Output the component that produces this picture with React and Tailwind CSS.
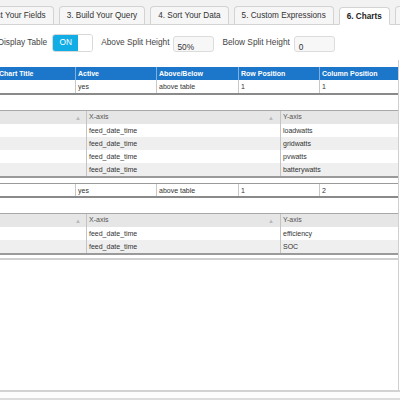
import React from "react";

const tabs = [
  { label: "2. Select Your Fields" },
  { label: "3. Build Your Query" },
  { label: "4. Sort Your Data" },
  { label: "5. Custom Expressions" },
  { label: "6. Charts", active: true },
  { label: "7. Publish" },
];

function Tab({ label, active }) {
  return (
    <div
      className={
        "h-[18px] shrink-0 px-[7px] border border-[#d3d3d3] rounded-t-[4px] leading-[17px] text-[8.2px] whitespace-nowrap " +
        (active
          ? "bg-white font-bold text-[#222] border-b-white -mb-px"
          : "bg-[#f6f6f6] text-[#333] border-b-0")
      }
    >
      {label}
    </div>
  );
}

function Arrow() {
  return <span className="text-[6px] text-[#b8b8b8] leading-none">▲</span>;
}

function MainHeader() {
  const cols = [
    ["Chart Title", "w-[79px]"],
    ["Active", "w-[81px]"],
    ["Above/Below", "w-[82px]"],
    ["Row Position", "w-[81px]"],
    ["Column Position", "flex-1"],
  ];
  return (
    <div className="flex h-[13px] bg-[#1c76c9] text-white font-bold text-[7px]">
      {cols.map(([t, w], i) => (
        <div
          key={t}
          className={w + " pl-[2px] leading-[13px] " + (i < 4 ? "border-r border-[#7fb0e0]" : "")}
        >
          {t}
        </div>
      ))}
    </div>
  );
}

function MainRow({ cells, top }) {
  const widths = ["w-[79px]", "w-[81px]", "w-[82px]", "w-[81px]", "flex-1"];
  return (
    <div
      className={
        "flex h-[15px] border-b-2 border-[#8a8a8a] text-[7px] text-[#333] " +
        (top ? "border-t border-t-[#9a9a9a]" : "")
      }
    >
      {cells.map((c, i) => (
        <div
          key={i}
          className={widths[i] + " pl-[2px] leading-[13px] " + (i < 4 ? "border-r border-[#c8c8c8]" : "")}
        >
          {c}
        </div>
      ))}
    </div>
  );
}

function SubTable({ rows }) {
  return (
    <div className="border-t border-[#a8a8a8] border-b-2 border-b-[#9a9a9a] text-[7px]">
      <div className="flex h-[13px] bg-[#e6e6e6] text-[#555]">
        <div className="w-[90px] flex items-center justify-end pr-[5px] border-r border-[#c4c4c4]">
          <Arrow />
        </div>
        <div className="w-[194px] flex items-center justify-between pl-[2px] pr-[6px] border-r border-[#c4c4c4]">
          <span>X-axis</span>
          <Arrow />
        </div>
        <div className="flex-1 flex items-center pl-[2px]">Y-axis</div>
      </div>
      {rows.map(([x, y], i) => (
        <div
          key={i}
          className={"flex h-[13px] text-[#333] " + (i % 2 ? "bg-[#efefef]" : "bg-white")}
        >
          <div className="w-[90px] border-r border-[#c4c4c4]" />
          <div className="w-[194px] pl-[2px] leading-[13px] border-r border-[#c4c4c4]">{x}</div>
          <div className="flex-1 pl-[2px] leading-[13px]">{y}</div>
        </div>
      ))}
    </div>
  );
}

export default function App() {
  return (
    <div className="w-[400px] h-[400px] overflow-hidden bg-white font-['Liberation_Sans',Arial,sans-serif] text-[#333] flex flex-col">
      {/* tab strip */}
      <div className="h-[25px] shrink-0 bg-[#f2f2f2] border-b border-[#d3d3d3] flex items-end gap-[5px] -ml-[37px]">
        {tabs.map((t) => (
          <Tab key={t.label} {...t} />
        ))}
      </div>

      {/* display options */}
      <div className="h-[35px] shrink-0 flex items-center -ml-[2px] text-[8.3px] text-[#444]">
        <span className="whitespace-nowrap">Display Table</span>
        <div className="ml-[5px] flex h-[18px] w-[41px] rounded-[3px] border border-[#d8d8d8] overflow-hidden">
          <div className="w-[25px] bg-[#13ade6] text-white flex items-center justify-center text-[8.3px]">ON</div>
          <div className="flex-1 bg-white" />
        </div>
        <span className="ml-[8px] whitespace-nowrap">Above Split Height</span>
        <div className="ml-[4px] mt-[2px] h-[16px] w-[41px] rounded-[3px] border border-[#dcdcdc] bg-[#f7f7f7] pl-[3px] pt-[4px] leading-[12px] text-[8.3px] text-[#333]">
          50%
        </div>
        <span className="ml-[8px] whitespace-nowrap">Below Split Height</span>
        <div className="ml-[4px] mt-[2px] h-[16px] w-[41px] rounded-[3px] border border-[#dcdcdc] bg-[#f7f7f7] pl-[4px] pt-[4px] leading-[12px] text-[8.3px] text-[#333]">
          0
        </div>
      </div>

      {/* chart list */}
      <div className="h-[330px] shrink-0 -ml-[3px] w-[402px] border-r border-[#cfcfcf] flex flex-col">
        <div className="h-[7px] shrink-0" />
        <MainHeader />
        <MainRow cells={["", "yes", "above table", "1", "1"]} />
        <div className="h-[15px] shrink-0" />
        <SubTable
          rows={[
            ["feed_date_time", "loadwatts"],
            ["feed_date_time", "gridwatts"],
            ["feed_date_time", "pvwatts"],
            ["feed_date_time", "batterywatts"],
          ]}
        />
        <div className="h-[5px] shrink-0" />
        <MainRow top cells={["", "yes", "above table", "1", "2"]} />
        <div className="h-[15px] shrink-0" />
        <SubTable
          rows={[
            ["feed_date_time", "efficiency"],
            ["feed_date_time", "SOC"],
          ]}
        />
        <div className="h-[3px] shrink-0" />
        <div className="h-[2px] shrink-0 bg-[#d0d0d0]" />
        <div className="flex-1" />
      </div>

      {/* scroll track */}
      <div className="h-[8px] shrink-0 border-t-2 border-[#d2d2d2] bg-[#fcfcfc]" />
      <div className="flex-1 border-t-2 border-[#dcdcdc] bg-[#f0f0f0]" />
    </div>
  );
}
